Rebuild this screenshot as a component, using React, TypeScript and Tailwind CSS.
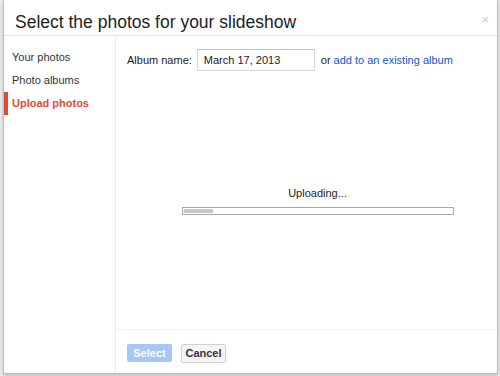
export default function App() {
  const nav = ["Your photos", "Photo albums", "Upload photos"]
  return (
    <div className="h-[376px] w-[500px] overflow-hidden bg-[#ececec] pl-[3px] pr-[2px] font-['Liberation_Sans',Arial,sans-serif]">
      <div className="flex h-[374px] flex-col border-x border-b border-[#bdbdbd] bg-white shadow-[0_2px_4px_rgba(0,0,0,0.2)]">
        <div className="relative h-[36px] shrink-0 border-b border-[#e5e5e5] pl-[11px] pt-[13px]">
          <h1 className="text-[17.5px] leading-[18px] text-[#222]">Select the photos for your slideshow</h1>
          <span className="absolute right-[8px] top-[13px] text-[13px] leading-none text-[#c4c4c4]">×</span>
        </div>
        <div className="flex flex-1">
          <div className="w-[112px] shrink-0 border-r border-[#ebebeb] pt-[10px]">
            {nav.map((item, i) => (
              <div
                key={item}
                className={
                  i === 2
                    ? "flex h-[23px] items-center border-l-4 border-[#dd4b39] pl-[4px] text-[11px] font-bold text-[#dd4b39]"
                    : "flex h-[23px] items-center pl-[8px] text-[11px] text-[#333]"
                }
              >
                {item}
              </div>
            ))}
          </div>
          <div className="flex flex-1 flex-col">
            <div className="flex-1 pl-[11px] pt-[13px]">
              <div className="flex items-center text-[11px] text-[#222]">
                <span>Album name:</span>
                <div className="ml-[5px] flex h-[22px] w-[118px] items-center border border-[#d9d9d9] border-t-[#c0c0c0] pl-[6px]">
                  March 17, 2013
                </div>
                <span className="ml-[6px]">or</span>
                <span className="ml-[3px] text-[#1155cc]">add to an existing album</span>
              </div>
              <div className="mt-[115px] flex flex-col items-center pl-[11px]">
                <div className="text-[11px] leading-[14px] text-[#222]">Uploading...</div>
                <div className="mt-[7px] h-[8px] w-[272px] border border-[#a8a8a8] p-[1px]">
                  <div className="h-full w-[29px] bg-[#c8c8c8]" />
                </div>
              </div>
            </div>
            <div className="flex h-[44px] shrink-0 items-center gap-[9px] border-t border-[#f0f0f0] pl-[11px] pt-[3px]">
              <div className="flex h-[18px] w-[45px] items-center justify-center rounded-[2px] bg-[#a8c6f4] text-[11px] font-bold text-white">
                Select
              </div>
              <div className="flex h-[19px] w-[45px] items-center justify-center rounded-[2px] border border-[#d0d0d0] bg-[#f5f5f5] text-[11px] font-bold text-[#333]">
                Cancel
              </div>
            </div>
          </div>
        </div>
      </div>
    </div>
  )
}
